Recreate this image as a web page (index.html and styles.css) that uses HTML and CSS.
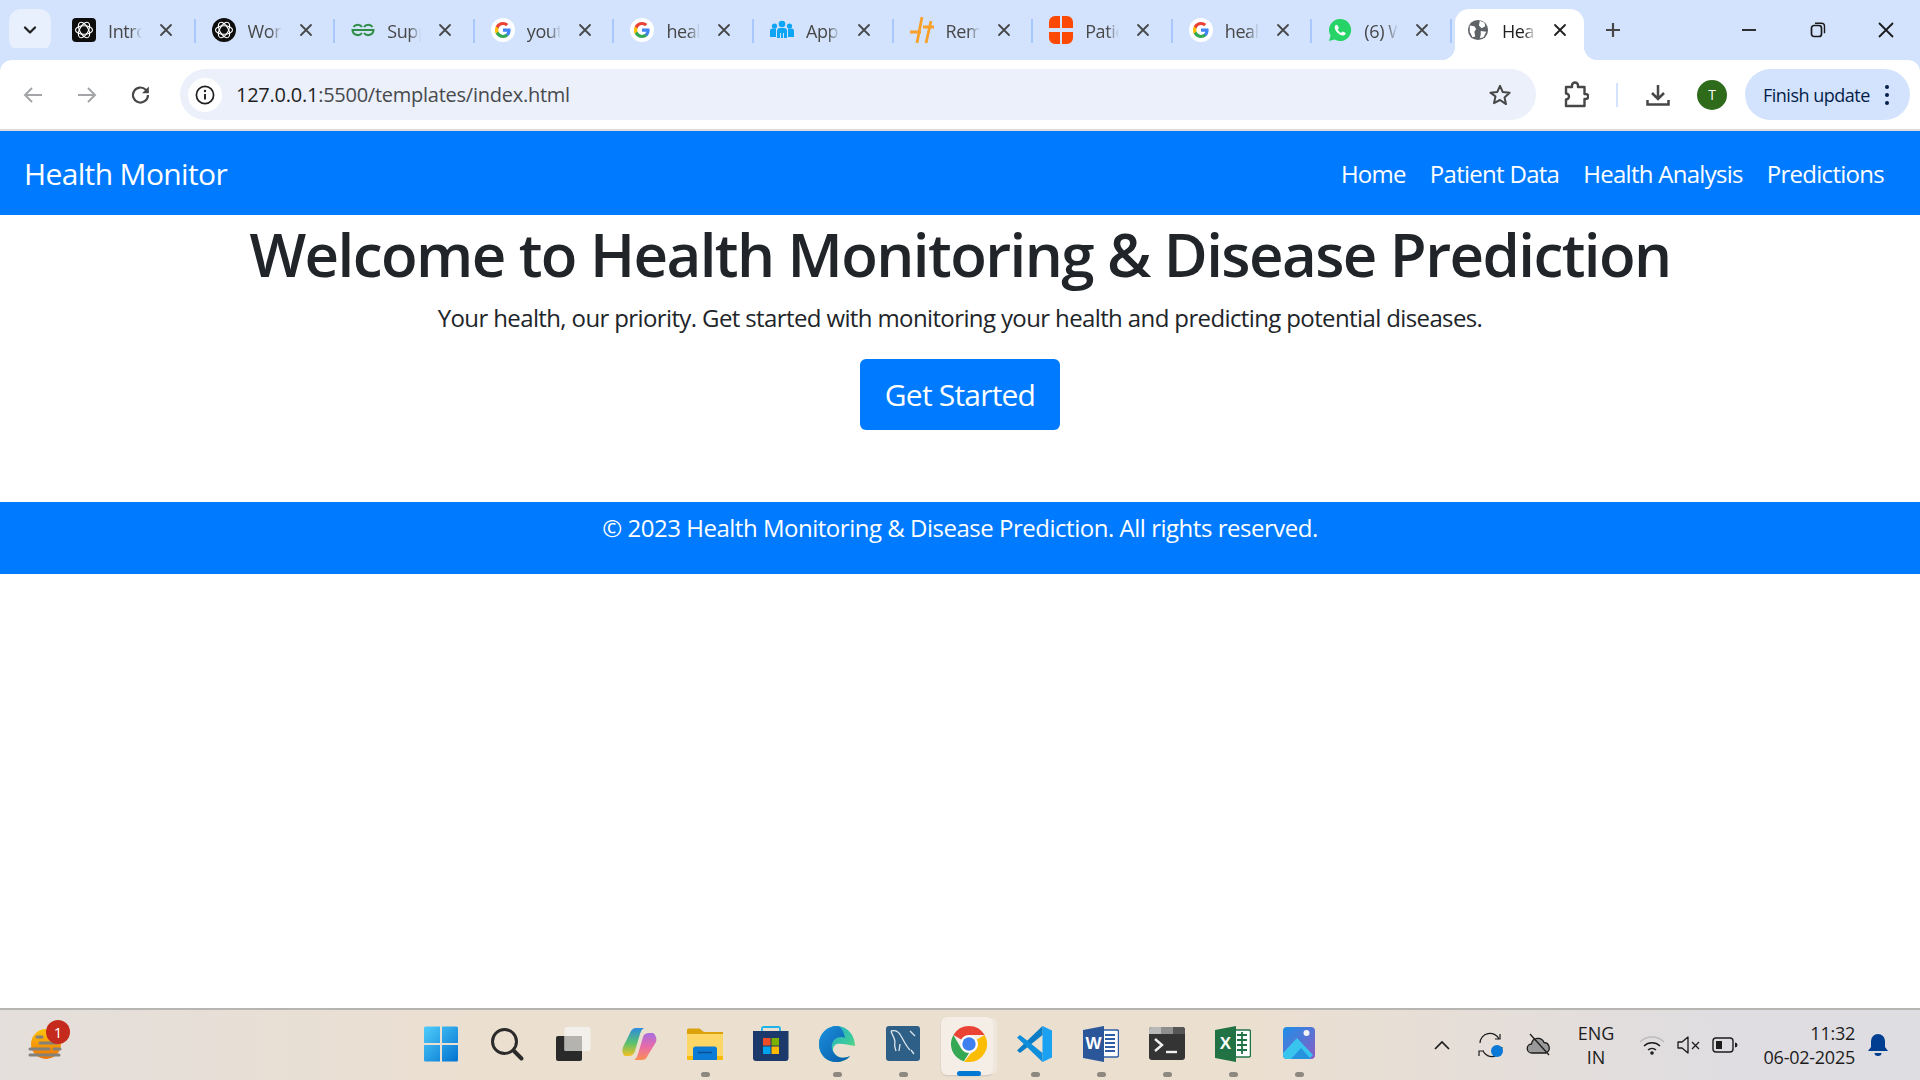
FILE: index.html
```html
<!DOCTYPE html>
<html lang="en">
<head>
<meta charset="utf-8">
<title>Health Monitor</title>
<link rel="stylesheet" href="styles.css">
</head>
<body>
<svg class="defs" width="0" height="0" aria-hidden="true">
  <defs>
    <symbol id="g" viewBox="0 0 24 24">
      <circle cx="12" cy="12" r="12" fill="#fff"/>
      <path d="M19.6 12.2c0-.6-.1-1.100-.2-1.600H12v3.100h4.300c-.2 1-.8 1.800-1.600 2.400v2h2.600c1.500-1.400 2.300-3.400 2.300-5.900z" fill="#4285f4"/>
      <path d="M12 20c2.200 0 4-.7 5.300-1.900l-2.600-2c-.7.500-1.600.8-2.700.8-2.100 0-3.900-1.400-4.500-3.300H4.800v2.100C6.100 18.300 8.800 20 12 20z" fill="#34a853"/>
      <path d="M7.500 13.600c-.3-1-.3-2.200 0-3.200V8.300H4.800c-1.100 2.200-1.100 5.200 0 7.400z" fill="#fbbc05"/>
      <path d="M12 7.100c1.200 0 2.200.4 3 1.200l2.300-2.300C15.900 4.700 14.100 4 12 4 8.800 4 6.100 5.700 4.800 8.300l2.700 2.100c.6-1.900 2.400-3.300 4.500-3.300z" fill="#ea4335"/>
    </symbol>
    <symbol id="knot" viewBox="0 0 24 24">
      <g fill="none" stroke="#fff" stroke-width="1.100">
        <ellipse cx="12" cy="12" rx="8.500" ry="4.300"/>
        <ellipse cx="12" cy="12" rx="8.500" ry="4.300" transform="rotate(60 12 12)"/>
        <ellipse cx="12" cy="12" rx="8.500" ry="4.300" transform="rotate(120 12 12)"/>
      </g>
    </symbol>
    <symbol id="x" viewBox="0 0 14 14">
      <path d="M2 2l10 10M12 2L2 12" fill="none" stroke="currentColor" stroke-width="1.800" stroke-linecap="round"/>
    </symbol>
  </defs>
</svg>

<div class="screen">
  <div class="tabstrip">
    <button class="tab-search"><svg width="14" height="9" viewBox="0 0 14 9"><path d="M2 1.500l5 5 5-5" fill="none" stroke="#1f1f1f" stroke-width="2.200" stroke-linecap="round" stroke-linejoin="round"/></svg></button>

    <div class="tab"><svg class="fav square" viewBox="0 0 24 24"><rect width="24" height="24" rx="4" fill="#0d0d0d"/><use href="#knot"/></svg><span class="tab-title">Intro</span><svg class="tab-x"><use href="#x"/></svg></div><i class="tab-sep"></i>
    <div class="tab"><svg class="fav" viewBox="0 0 24 24"><circle cx="12" cy="12" r="12" fill="#0d0d0d"/><use href="#knot"/></svg><span class="tab-title">Wor</span><svg class="tab-x"><use href="#x"/></svg></div><i class="tab-sep"></i>
    <div class="tab"><svg class="fav" viewBox="0 0 24 24"><g fill="none" stroke="#2f8d46" stroke-width="2"><path d="M12 12h10.500a5.300 5.300 0 0 1-9.500 3M12 12H1.500a5.300 5.300 0 0 0 9.500 3"/><path d="M21.500 9a5 5 0 0 0-8.500 0M2.500 9a5 5 0 0 1 8.500 0"/></g></svg><span class="tab-title">Supp</span><svg class="tab-x"><use href="#x"/></svg></div><i class="tab-sep"></i>
    <div class="tab"><svg class="fav"><use href="#g"/></svg><span class="tab-title">yout</span><svg class="tab-x"><use href="#x"/></svg></div><i class="tab-sep"></i>
    <div class="tab"><svg class="fav"><use href="#g"/></svg><span class="tab-title">heal</span><svg class="tab-x"><use href="#x"/></svg></div><i class="tab-sep"></i>
    <div class="tab"><svg class="fav" viewBox="0 0 24 24"><g fill="#0fa5f5"><circle cx="12" cy="6" r="3.300"/><circle cx="4.500" cy="8" r="2.600"/><circle cx="19.500" cy="8" r="2.600"/><path d="M7 20v-7a3 3 0 0 1 3-3h4a3 3 0 0 1 3 3v7h-3v-5h-1v5h-2v-5h-1v5z"/><path d="M0 19v-6a2.500 2.500 0 0 1 2.500-2.500H6V19zM24 19v-6a2.500 2.500 0 0 0-2.500-2.500H18V19z"/></g></svg><span class="tab-title">App</span><svg class="tab-x"><use href="#x"/></svg></div><i class="tab-sep"></i>
    <div class="tab"><svg class="fav tall" viewBox="0 0 24 28"><g fill="none" stroke="#f9a02b" stroke-width="2.800"><path d="M12 1L7 27M21 5l-5 22M0 16h11M13 11h11"/></g></svg><span class="tab-title">Rem</span><svg class="tab-x"><use href="#x"/></svg></div><i class="tab-sep"></i>
    <div class="tab"><svg class="fav tall" viewBox="0 0 24 28"><g fill="#fc4a04"><path d="M6 0h5v12H0V6a6 6 0 0 1 6-6zM13 0h5a6 6 0 0 1 6 6v6H13zM0 16h11v12H6a6 6 0 0 1-6-6zM13 16h11v6a6 6 0 0 1-6 6h-5z"/></g></svg><span class="tab-title">Patie</span><svg class="tab-x"><use href="#x"/></svg></div><i class="tab-sep"></i>
    <div class="tab"><svg class="fav"><use href="#g"/></svg><span class="tab-title">heal</span><svg class="tab-x"><use href="#x"/></svg></div><i class="tab-sep"></i>
    <div class="tab"><svg class="fav" viewBox="0 0 24 24"><path d="M12 1a11 11 0 0 0-9.400 16.600L1 23l5.600-1.500A11 11 0 1 0 12 1z" fill="#25d366"/><path d="M8.300 6.800c-.5 0-1.600 1-1.600 2.700 0 3.200 4.500 8 8.400 8 1.500 0 2.600-1.200 2.600-2.200 0-.4-2.500-1.700-3-1.700-.4 0-1 1.100-1.400 1.100-1 0-3.500-2.400-3.500-3.300 0-.5 1-1 1-1.500 0-.5-1.100-3.100-2.500-3.100z" fill="#fff"/></svg><span class="tab-title">(6) W</span><svg class="tab-x"><use href="#x"/></svg></div><i class="tab-sep"></i>

    <div class="tab tab-active"><svg class="fav globe" viewBox="0 0 24 24"><circle cx="12" cy="12" r="11" fill="#5f6368"/><path d="M3 7l5 1 2 3-2 3 1 5-3 1-3-6zM14 2l5 2 1 4-4 2-3-3zM15 13l6 1-3 6-4 1 1-4z" fill="#fff"/></svg><span class="tab-title">Hea</span><svg class="tab-x"><use href="#x"/></svg></div>

    <button class="new-tab"><svg width="18" height="18" viewBox="0 0 18 18"><path d="M9 2v14M2 9h14" stroke="#474747" stroke-width="2.200"/></svg></button>

    <div class="win-controls">
      <span class="win-btn"><svg width="16" height="16" viewBox="0 0 16 16"><path d="M1 8h14" stroke="#1a1a1a" stroke-width="1.800"/></svg></span>
      <span class="win-btn"><svg width="16" height="16" viewBox="0 0 16 16"><rect x="1.500" y="3.500" width="10" height="11" rx="2.500" fill="none" stroke="#1a1a1a" stroke-width="1.700"/><path d="M5 1.200h6.500a3 3 0 0 1 3 3v7" fill="none" stroke="#1a1a1a" stroke-width="1.400"/></svg></span>
      <span class="win-btn"><svg width="18" height="18" viewBox="0 0 18 18"><path d="M2 2l14 14M16 2L2 16" stroke="#1a1a1a" stroke-width="1.800"/></svg></span>
    </div>
  </div>

  <div class="toolbar">
    <span class="tool"><svg width="22" height="22" viewBox="0 0 22 22"><path d="M20 11H3M10 4l-7 7 7 7" fill="none" stroke="#a3a5a8" stroke-width="2"/></svg></span>
    <span class="tool"><svg width="22" height="22" viewBox="0 0 22 22"><path d="M2 11h17M12 4l7 7-7 7" fill="none" stroke="#a3a5a8" stroke-width="2"/></svg></span>
    <span class="tool"><svg width="22" height="22" viewBox="0 0 22 22"><path d="M18 11a7.500 7.500 0 1 1-2.200-5.300L18 8" fill="none" stroke="#474747" stroke-width="2.200"/><path d="M18.800 2.500v6.800H12z" fill="#474747"/></svg></span>
    <div class="omnibox">
      <span class="site-info"><svg width="20" height="20" viewBox="0 0 20 20"><circle cx="10" cy="10" r="8.600" fill="none" stroke="#1f1f1f" stroke-width="1.700"/><path d="M10 9v5.500" stroke="#1f1f1f" stroke-width="1.900"/><circle cx="10" cy="6" r="1.200" fill="#1f1f1f"/></svg></span>
      <span class="url">127.0.0.1<span class="url-dim">:5500/templates/index.html</span></span>
      <svg class="star" width="24" height="24" viewBox="0 0 24 24"><path d="M12 2.800l2.800 6.300 6.800.7-5.100 4.600 1.500 6.700L12 17l-6 3.100 1.500-6.700L2.400 9.800l6.800-.7z" fill="none" stroke="#474747" stroke-width="2" stroke-linejoin="round"/></svg>
    </div>
    <span class="tool-ext"><svg width="26" height="28" viewBox="0 0 26 28"><path d="M3 6h6V4.500a3 3 0 0 1 6 0V6h6.500v7h1.200a2.500 2.500 0 0 1 0 5h-1.200v7H3v-6.500a3 3 0 0 0 0-6V6z" fill="none" stroke="#474747" stroke-width="2.400" stroke-linejoin="round"/></svg></span>
    <i class="tool-sep"></i>
    <span class="tool-dl"><svg width="26" height="26" viewBox="0 0 26 26"><path d="M13 3v14M7 11l6 6 6-6" fill="none" stroke="#474747" stroke-width="2.500"/><path d="M2.500 18v4.500h21V18" fill="none" stroke="#474747" stroke-width="2.500"/></svg></span>
    <span class="avatar">T</span>
    <div class="update"><span>Finish update</span><span class="dots"><i></i><i></i><i></i></span></div>
  </div>

  <nav class="navbar">
    <a class="brand">Health Monitor</a>
    <div class="nav-links">
      <a>Home</a>
      <a>Patient Data</a>
      <a>Health Analysis</a>
      <a>Predictions</a>
    </div>
  </nav>

  <main class="hero">
    <h1>Welcome to Health Monitoring &amp; Disease Prediction</h1>
    <p>Your health, our priority. Get started with monitoring your health and predicting potential diseases.</p>
    <a class="cta">Get Started</a>
  </main>

  <footer class="site-footer">
    <p>© 2023 Health Monitoring &amp; Disease Prediction. All rights reserved.</p>
  </footer>

  <div class="page-rest"></div>

  <div class="taskbar">
    <div class="tb-left">
      <span class="weather">
        <svg width="38" height="36" viewBox="0 0 38 36">
          <defs><linearGradient id="sun" x1="0" y1="0" x2="0" y2="1"><stop offset="0" stop-color="#fcc40a"/><stop offset="1" stop-color="#ee7204"/></linearGradient></defs>
          <circle cx="19" cy="18" r="15" fill="url(#sun)"/>
          <path d="M10 11h5M13 17h18M3 23h19M27 23h6M3 29h29" stroke="#84807a" stroke-width="3" stroke-linecap="round"/>
        </svg>
        <b class="badge">1</b>
      </span>
    </div>

    <div class="tb-apps">
      <span class="app"><svg width="36" height="36" viewBox="0 0 36 36"><defs><linearGradient id="win" x1="0" y1="0" x2="1" y2="1"><stop offset="0" stop-color="#4fcdfb"/><stop offset="1" stop-color="#0272d0"/></linearGradient></defs><path d="M1 2a1.500 1.500 0 0 1 1.500-1.500H17V17H1zM19 .5h14.500A1.500 1.500 0 0 1 35 2v15H19zM1 19h16v16.500H2.500A1.500 1.500 0 0 1 1 34zM19 19h16v15a1.500 1.500 0 0 1-1.500 1.500H19z" fill="url(#win)"/></svg></span>
      <span class="app"><svg width="36" height="36" viewBox="0 0 36 36"><circle cx="15.500" cy="15.500" r="12" fill="none" stroke="#2b2b2b" stroke-width="3"/><path d="M25 25l7.500 7.500" stroke="#2b2b2b" stroke-width="4" stroke-linecap="round"/></svg></span>
      <span class="app"><svg width="36" height="36" viewBox="0 0 36 36"><rect x="1" y="10" width="26" height="25" rx="2" fill="#2a2a2a"/><rect x="9.500" y="1" width="26" height="24" rx="2" fill="#f5f3f0" fill-opacity=".85"/><rect x="9.500" y="10" width="17.500" height="15" fill="#b5b3b0"/></svg></span>
      <span class="app"><svg width="36" height="36" viewBox="0 0 36 36"><defs><linearGradient id="cop1" x1="0" y1="0" x2="0" y2="1"><stop offset="0" stop-color="#2d8ce0"/><stop offset=".55" stop-color="#5cc26b"/><stop offset="1" stop-color="#f5c022"/></linearGradient><linearGradient id="cop2" x1="0" y1="0" x2="0" y2="1"><stop offset="0" stop-color="#a86ee0"/><stop offset=".5" stop-color="#e86aa8"/><stop offset="1" stop-color="#f99055"/></linearGradient></defs><path d="M9 7c1-3 3-5 6-5h8c-2 1-3 3-4 6l-5 17c-1 3-3 5-6 5H4c-3-2-3-6-2-9z" fill="url(#cop1)"/><path d="M27 29c-1 3-3 5-6 5h-8c2-1 3-3 4-6l5-17c1-3 3-4 6-4h4c3 2 4 6 3 9z" fill="url(#cop2)"/></svg></span>
      <span class="app dot"><svg width="36" height="36" viewBox="0 0 36 36"><path d="M0 4a1.500 1.500 0 0 1 1.500-1.500h11L17 6h19v4H0z" fill="#dba20c"/><path d="M0 8h36v24.500a1.500 1.500 0 0 1-1.500 1.500h-33A1.500 1.500 0 0 1 0 32.500z" fill="#fdd765"/><path d="M30 34V23a2.500 2.500 0 0 0-2.500-2.500h-19A2.500 2.500 0 0 0 6 23v11z" fill="#0c7bd6"/><path d="M0 30h6v4H1.500A1.500 1.500 0 0 1 0 32.500zM36 30h-6v4h4.500a1.500 1.500 0 0 0 1.500-1.500z" fill="#fbbb0a"/><path d="M11 26.500h14" stroke="#0a4f94" stroke-width="1.500"/></svg></span>
      <span class="app"><svg width="36" height="36" viewBox="0 0 36 36"><path d="M9 7V2.500A1.500 1.500 0 0 1 10.500 1h15A1.500 1.500 0 0 1 27 2.500V7" fill="none" stroke="#1fb4e8" stroke-width="1.800"/><path d="M0 5h35.500v27a3 3 0 0 1-3 3H3a3 3 0 0 1-3-3z" fill="#1b3a6b"/><rect x="10" y="12" width="7.500" height="7.500" fill="#ef4e26"/><rect x="18.500" y="12" width="7.500" height="7.500" fill="#7db300"/><rect x="10" y="20.500" width="7.500" height="7.500" fill="#00a3ee"/><rect x="18.500" y="20.500" width="7.500" height="7.500" fill="#fdb900"/></svg></span>
      <span class="app dot"><svg width="36" height="36" viewBox="0 0 36 36"><defs><linearGradient id="edge1" x1="0" y1="0" x2="1" y2="1"><stop offset="0" stop-color="#1ba4d8"/><stop offset=".6" stop-color="#3bc9a0"/><stop offset="1" stop-color="#7ce05c"/></linearGradient><linearGradient id="edge2" x1="0" y1="0" x2="1" y2="1"><stop offset="0" stop-color="#1a90dd"/><stop offset="1" stop-color="#0a5aa8"/></linearGradient></defs><path d="M18 0C8 0 0 8 0 18c0 11 8 18 17 18 5 0 11-2 14-6-6 3-13 2-16-3-2-3-1-8 3-9 5-1 10 1 18 2 0-11-8-20-18-20z" fill="url(#edge1)"/><path d="M18 0C8 0 0 8 0 18c0 11 8 18 17 18 5 0 11-2 14-6-6 3-13 2-16-3-3-4-3-9 0-13 3-3 8-4 11-2C25 6 22 0 18 0z" fill="url(#edge2)"/></svg></span>
      <span class="app dot"><svg width="36" height="36" viewBox="0 0 36 36"><rect x="1" y="0" width="34" height="35" rx="3" fill="#2e5f86"/><path d="M6 5c4-1 8 1 10 5 3 5 5 10 9 14M6 5c1 4 4 7 4 11-1 3 0 6 1 9M15 18l-1 7M26 24l3 4M25 5l5 5" fill="none" stroke="#dbe6ee" stroke-width="1.300"/></svg></span>
      <span class="app app-active"><svg width="36" height="36" viewBox="0 0 36 36"><path d="M18 0a18 18 0 0 1 15.600 9H18a9 9 0 0 0-7.800 4.500L2.400 9A18 18 0 0 1 18 0z" fill="#ea4335"/><path d="M2.400 9l7.800 13.500A9 9 0 0 0 18 27l-5.200 8.300A18 18 0 0 1 2.400 9z" fill="#34a853"/><path d="M33.600 9A18 18 0 0 1 18 36h-5l7.600-9.300A9 9 0 0 0 25.800 13.500z" fill="#fbbc05"/><circle cx="18" cy="18" r="8.500" fill="#fff"/><circle cx="18" cy="18" r="6.700" fill="#3f7ff0"/></svg></span>
      <span class="app dot"><svg width="36" height="36" viewBox="0 0 36 36"><path d="M25.500 0L35 4.500v27L25.500 36V0z" fill="#1aa1f1"/><path d="M25.500 0v9L9.500 22 3 27l-3-2.500L25.500 0z" fill="#0a7dc6"/><path d="M25.500 36v-9L9.500 14 3 9 0 11.500 25.500 36z" fill="#0f8edb"/></svg></span>
      <span class="app dot"><svg width="36" height="36" viewBox="0 0 36 36"><path d="M13 4h21a1.500 1.500 0 0 1 1.500 1.500v24A1.500 1.500 0 0 1 34 31H13z" fill="#fff" stroke="#2f5ea5" stroke-width="1.500"/><path d="M22 9h10M22 13h10M22 17h10M22 21h10M22 25h10" stroke="#2f5ea5" stroke-width="1.800"/><path d="M0 4l21-4v36L0 32z" fill="#2b579a"/><text class="office-letter" x="10.500" y="23">W</text></svg></span>
      <span class="app dot"><svg width="36" height="36" viewBox="0 0 36 36"><rect y="1" width="36" height="33" rx="3" fill="#343434"/><path d="M0 4a3 3 0 0 1 3-3h9v7H0z" fill="#b9b9b9"/><rect x="12" y="1" width="12" height="7" fill="#8f8f8f"/><path d="M24 1h9a3 3 0 0 1 3 3v4H24z" fill="#555"/><path d="M6 13l7 6-7 6" fill="none" stroke="#f0f0f0" stroke-width="2.400"/><path d="M17 26h11" stroke="#f0f0f0" stroke-width="2.400"/></svg></span>
      <span class="app dot"><svg width="36" height="36" viewBox="0 0 36 36"><path d="M13 4h21a1.500 1.500 0 0 1 1.500 1.500v24A1.500 1.500 0 0 1 34 31H13z" fill="#fff" stroke="#217346" stroke-width="1.500"/><path d="M22 9h10M22 14h10M22 19h10M22 24h10M27 6v22" stroke="#217346" stroke-width="1.800"/><path d="M0 4l21-4v36L0 32z" fill="#217346"/><text class="office-letter" x="10.500" y="23">X</text></svg></span>
      <span class="app dot"><svg width="36" height="36" viewBox="0 0 36 36"><defs><linearGradient id="ph" x1="0" y1="0" x2="1" y2="1"><stop offset="0" stop-color="#1d8fe8"/><stop offset="1" stop-color="#8a5cc4"/></linearGradient></defs><rect x="2" y="1" width="32" height="32" rx="4" fill="url(#ph)"/><circle cx="25.500" cy="7" r="3" fill="#f3f3f3"/><path d="M2 27l14-15 16 17-4 4H6a4 4 0 0 1-4-4z" fill="#39c4ee"/><path d="M10 33l10-11 10 11z" fill="#2593de"/></svg></span>
    </div>

    <div class="tray">
      <span class="tray-ic chev"><svg width="18" height="12" viewBox="0 0 18 12"><path d="M2 10l7-7 7 7" fill="none" stroke="#1c1c1c" stroke-width="1.700"/></svg></span>
      <span class="tray-ic sync"><svg width="26" height="26" viewBox="0 0 26 26"><path d="M2 11a10 10 0 0 1 19-4M24 15A10 10 0 0 1 5 19" fill="none" stroke="#1c1c1c" stroke-width="1.200"/><path d="M22 2v5h-5M1 24v-5h5" fill="none" stroke="#1c1c1c" stroke-width="1.200"/><circle cx="19" cy="19" r="6" fill="#0a78d7"/></svg></span>
      <span class="tray-ic cloud"><svg width="26" height="24" viewBox="0 0 26 24"><path d="M6 20a4.500 4.500 0 0 1-.5-9 6.500 6.500 0 0 1 12.500-1.500A5.500 5.500 0 0 1 20 20z" fill="#9a9a9a" stroke="#1c1c1c" stroke-width="1.300"/><path d="M4 1l19 21" stroke="#1c1c1c" stroke-width="1.300"/></svg></span>
      <span class="lang"><span>ENG</span><span>IN</span></span>
      <span class="tray-ic wifi"><svg width="26" height="22" viewBox="0 0 26 22"><path d="M1 8a17 17 0 0 1 24 0" fill="none" stroke="#bdbdbd" stroke-width="1.500"/><path d="M5 12a11.500 11.500 0 0 1 16 0M9 16a6 6 0 0 1 8 0" fill="none" stroke="#1c1c1c" stroke-width="1.500"/><circle cx="13" cy="19" r="1.800" fill="#1c1c1c"/></svg></span>
      <span class="tray-ic vol"><svg width="24" height="20" viewBox="0 0 24 20"><path d="M1 7h4l6-5v16l-6-5H1z" fill="none" stroke="#1c1c1c" stroke-width="1.300" stroke-linejoin="round"/><path d="M15 7l7 7M22 7l-7 7" stroke="#1c1c1c" stroke-width="1.300"/></svg></span>
      <span class="tray-ic batt"><svg width="26" height="18" viewBox="0 0 26 18"><rect x="1" y="2" width="20" height="14" rx="3" fill="none" stroke="#1c1c1c" stroke-width="1.400"/><rect x="4" y="5" width="6" height="8" fill="#1c1c1c"/><path d="M23 6.500a2.500 2.500 0 0 1 0 5z" fill="#1c1c1c"/></svg></span>
      <span class="clock"><span>11:32</span><span>06-02-2025</span></span>
      <span class="tray-ic bell"><svg width="22" height="24" viewBox="0 0 22 24"><path d="M11 1a7 7 0 0 0-7 7v6l-3 4h20l-3-4V8a7 7 0 0 0-7-7z" fill="#003e92"/><path d="M7.500 20a3.500 3 0 0 0 7 0z" fill="#003e92"/></svg></span>
    </div>
  </div>
</div>
</body>
</html>
```
FILE: styles.css
```css
* { box-sizing: border-box; }
html, body { margin: 0; height: 100%; }
body { font-family: "Open Sans", "Noto Sans", sans-serif; color: #212529; background: #fff; overflow: hidden; }
.defs { position: absolute; }
button { border: 0; background: none; padding: 0; font: inherit; }
a { color: inherit; text-decoration: none; }

.screen { height: 1080px; display: flex; flex-direction: column; }

/* Browser tab strip */
.tabstrip { flex: none; height: 60px; background: #d3e3fd; display: flex; align-items: flex-end; padding-left: 9px; }
.tab-search { width: 42px; height: 42px; margin: 0 5px 9px 0; border-radius: 12px; background: #e9f0fd; display: flex; align-items: center; justify-content: center; }
.tab { flex: none; width: 137.6px; height: 51px; display: flex; align-items: center; padding-left: 16px; padding-bottom: 9px; color: #474747; }
.fav { flex: none; width: 24px; height: 24px; }
.fav.square, .fav.tall { height: 28px; }
.tab-title { flex: none; width: 46px; margin: 0 -12px 0 12px; padding-top: 2px; font-size: 18px; letter-spacing: -.4px; white-space: nowrap; -webkit-mask-image: linear-gradient(90deg, #000 22px, transparent 34px); mask-image: linear-gradient(90deg, #000 22px, transparent 34px); }
.tab-x { flex: none; width: 14px; height: 14px; margin-left: 17px; color: #474747; }
.tab-sep { flex: none; width: 2px; height: 24px; margin-bottom: 17px; background: #a8c7fa; }
.tab-active { position: relative; width: 129px; margin-left: 3px; padding-left: 12px; background: #fff; border-radius: 14px 14px 0 0; color: #1f1f1f; }
.tab-active::before, .tab-active::after { content: ""; position: absolute; bottom: 0; width: 14px; height: 14px; }
.tab-active::before { left: -14px; background: radial-gradient(circle at 0 0, #d3e3fd 14px, #fff 14.5px); }
.tab-active::after { right: -14px; background: radial-gradient(circle at 100% 0, #d3e3fd 14px, #fff 14.5px); }
.tab-active .fav { width: 22px; height: 22px; }
.tab-active .tab-title { margin-left: 13px; }
.tab-active .tab-x { margin-left: 17px; color: #1f1f1f; }
.new-tab { width: 36px; height: 36px; margin: 0 0 12px 11px; display: flex; align-items: center; justify-content: center; }
.win-controls { margin-left: auto; height: 60px; align-self: flex-start; display: flex; align-items: center; }
.win-btn { width: 68px; display: flex; justify-content: center; }
.win-btn:first-child { margin-right: 1px; }

/* Browser toolbar */
.toolbar { flex: none; height: 71px; background: #fff; border-bottom: 2px solid #dcdcdc; border-radius: 12px 12px 0 0; display: flex; align-items: center; padding: 0 10px 0 6px; box-shadow: 0 -12px 0 #d3e3fd; }
.tool { width: 54px; display: flex; justify-content: center; }
.omnibox { flex: 1; min-width: 0; height: 51px; margin-left: 12px; background: #ebf0fa; border-radius: 26px; display: flex; align-items: center; padding: 0 24px 0 8px; }
.site-info { width: 34px; height: 34px; border-radius: 50%; background: #fff; display: flex; align-items: center; justify-content: center; }
.url { margin-left: 14px; font-size: 20px; letter-spacing: -.25px; color: #1f1f1f; }
.url-dim { color: #474a4d; }
.star { margin-left: auto; }
.tool-ext { width: 40px; margin-left: 20px; display: flex; justify-content: center; }
.tool-sep { width: 2px; height: 24px; margin-left: 20px; background: #d3e3fd; }
.tool-dl { width: 40px; margin-left: 20px; display: flex; justify-content: center; }
.avatar { width: 30px; height: 30px; margin-left: 19px; border-radius: 50%; background: #2e6b1a; color: #fff; font-size: 14px; display: flex; align-items: center; justify-content: center; }
.update { width: 165px; height: 51px; margin-left: 18px; background: #d3e3fd; border-radius: 26px; display: flex; align-items: center; padding-left: 18px; font-size: 18px; letter-spacing: -.5px; color: #041e49; }
.dots { margin-left: auto; margin-right: 21px; display: flex; flex-direction: column; gap: 4px; }
.dots i { width: 4px; height: 4px; border-radius: 50%; background: #041e49; }

/* Page */
.navbar { flex: none; height: 84px; background: #007bff; color: #fff; display: flex; align-items: center; justify-content: space-between; padding: 0 36px 0 24px; }
.brand { font-size: 30px; letter-spacing: -.65px; }
.nav-links { display: flex; gap: 24px; font-size: 24px; letter-spacing: -.72px; }

.hero { flex: none; height: 287px; padding-top: 3px; text-align: center; }
.hero h1 { margin: 0; font-size: 60px; line-height: 72px; font-weight: 600; letter-spacing: -1.57px; }
.hero p { margin: 10px 0 23px; font-size: 24px; line-height: 36px; letter-spacing: -.62px; }
.cta { display: inline-block; width: 200px; height: 71px; line-height: 71px; background: #007bff; color: #fff; border-radius: 6px; font-size: 30px; letter-spacing: -.8px; }

.site-footer { flex: none; height: 72px; background: #007bff; color: #fff; text-align: center; padding-top: 8px; }
.site-footer p { margin: 0; font-size: 24px; line-height: 36px; letter-spacing: -.48px; }
.page-rest { flex: 1; }

/* Windows taskbar */
.taskbar { flex: none; height: 72px; border-top: 2px solid #b7b5b2; background: linear-gradient(90deg, #e4dfdc 0, #ebdfd0 25%, #ebdfd0 65%, #dfdde1 90%, #dedde2 100%); display: flex; align-items: center; }
.tb-left { flex: none; width: 408px; padding-left: 27px; display: flex; }
.weather { position: relative; display: block; width: 38px; height: 36px; margin-top: -3px; }
.badge { position: absolute; left: 19px; top: -6px; width: 24px; height: 24px; border-radius: 50%; background: #c42b1c; color: #fff; font-size: 15px; font-weight: 400; text-align: center; line-height: 24px; }
.tb-apps { flex: none; display: flex; }
.app { position: relative; width: 66px; height: 66px; display: flex; align-items: center; justify-content: center; }
.app svg { position: relative; display: block; margin-top: -2px; }
.app.dot::after { content: ""; position: absolute; left: 29px; bottom: 1px; width: 9px; height: 5px; border-radius: 3px; background: #8d8880; }
.app-active::before { content: ""; position: absolute; left: 5px; top: 5px; width: 52px; height: 58px; background: #f4eee7; border-radius: 6px; box-shadow: 5px 0 0 -1px #efe6dc, 0 1px 2px rgba(0,0,0,.12); }
.app-active::after { content: ""; position: absolute; left: 21px; bottom: 2px; width: 24px; height: 5px; border-radius: 3px; background: #0078d4; }
.office-letter { font-family: "Liberation Sans", sans-serif; font-size: 17px; font-weight: 700; fill: #fff; text-anchor: middle; }
.tray { flex: 1; display: flex; align-items: center; color: #1c1c1c; font-size: 18px; }
.tray-ic { display: flex; justify-content: center; }
.chev { margin-left: 101px; }
.sync { margin-left: 27px; }
.cloud { margin-left: 22px; }
.lang { margin-left: 25px; width: 38px; display: flex; flex-direction: column; align-items: center; line-height: 24px; }
.wifi { margin-left: 24px; }
.vol { margin-left: 12px; }
.batt { margin-left: 11px; }
.clock { width: 114px; margin-left: 3px; display: flex; flex-direction: column; align-items: flex-end; line-height: 24px; letter-spacing: -.25px; }
.bell { margin-left: 12px; }
```
